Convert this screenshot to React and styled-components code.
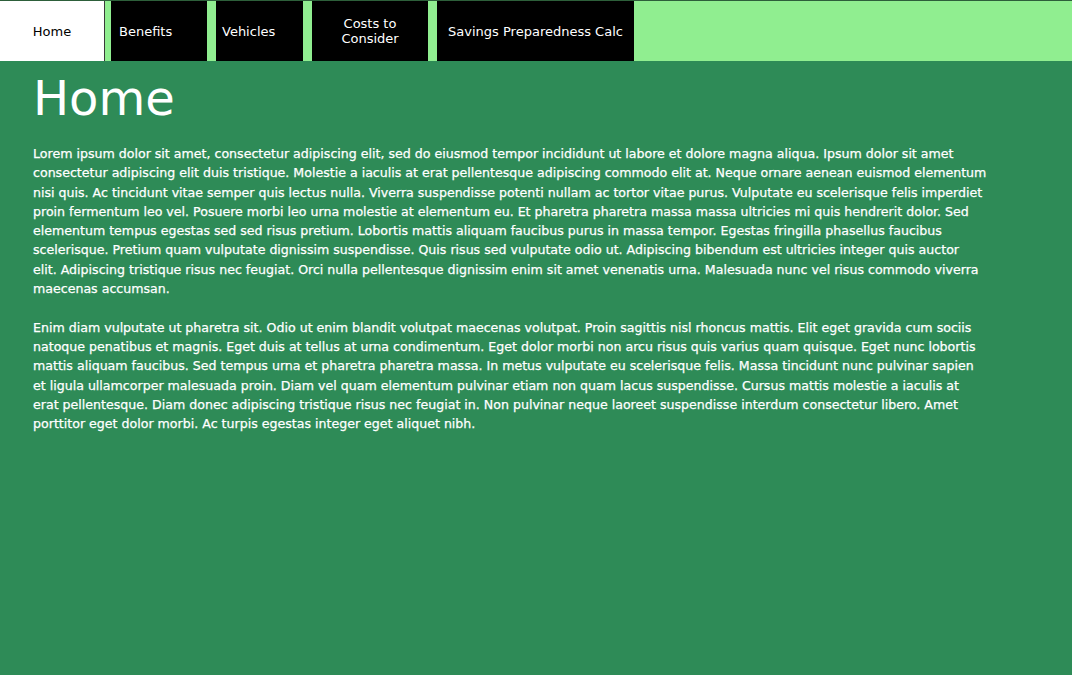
import styled, { createGlobalStyle } from "styled-components";

const GlobalStyle = createGlobalStyle`
  html, body {
    margin: 0;
    padding: 0;
    background-color: #2e8b57;
    font-family: "DejaVu Sans", Verdana, sans-serif;
  }
`;

const Page = styled.div`
  min-height: 675px;
  background-color: #2e8b57;
  color: #ffffff;
`;

const NavBar = styled.nav`
  display: flex;
  align-items: stretch;
  height: 60px;
  background-color: #90ee90;
  border-top: 1px solid #2d5f3a;
`;

const Tab = styled.a`
  display: flex;
  align-items: center;
  justify-content: ${({ center }) => (center ? "center" : "flex-start")};
  box-sizing: border-box;
  width: ${({ w }) => w}px;
  padding-left: ${({ pad }) => pad || 0}px;
  margin-right: ${({ gap }) => gap}px;
  background-color: ${({ active }) => (active ? "#ffffff" : "#000000")};
  color: ${({ active }) => (active ? "#000000" : "#ffffff")};
  border-right: ${({ active }) => (active ? "1px solid #3a3a3a" : "none")};
  font-size: 13px;
  line-height: 15px;
  text-align: center;
  text-decoration: none;
  white-space: pre-line;
  cursor: pointer;
`;

const Main = styled.main`
  padding: 0 33px;
  max-width: 953.6px;
`;

const Title = styled.h1`
  margin: 7px 0 16px;
  font-size: 48px;
  font-weight: normal;
  line-height: 60px;
`;

const Para = styled.p`
  margin: 0 0 19.3px;
  font-size: 12.6px;
  line-height: 19.3px;
  -webkit-text-stroke: 0.25px #ffffff;
`;

const tabs = [
  { label: "Home", w: 105, gap: 6, center: true, active: true },
  { label: "Benefits", w: 96, gap: 9, pad: 8 },
  { label: "Vehicles", w: 87, gap: 9, pad: 6 },
  { label: "Costs to\nConsider", w: 116, gap: 9, center: true },
  { label: "Savings Preparedness Calc", w: 197, gap: 0, center: true },
];

const p1 =
  "Lorem ipsum dolor sit amet, consectetur adipiscing elit, sed do eiusmod tempor incididunt ut labore et dolore magna aliqua. Ipsum dolor sit amet consectetur adipiscing elit duis tristique. Molestie a iaculis at erat pellentesque adipiscing commodo elit at. Neque ornare aenean euismod elementum nisi quis. Ac tincidunt vitae semper quis lectus nulla. Viverra suspendisse potenti nullam ac tortor vitae purus. Vulputate eu scelerisque felis imperdiet proin fermentum leo vel. Posuere morbi leo urna molestie at elementum eu. Et pharetra pharetra massa massa ultricies mi quis hendrerit dolor. Sed elementum tempus egestas sed sed risus pretium. Lobortis mattis aliquam faucibus purus in massa tempor. Egestas fringilla phasellus faucibus scelerisque. Pretium quam vulputate dignissim suspendisse. Quis risus sed vulputate odio ut. Adipiscing bibendum est ultricies integer quis auctor elit. Adipiscing tristique risus nec feugiat. Orci nulla pellentesque dignissim enim sit amet venenatis urna. Malesuada nunc vel risus commodo viverra maecenas accumsan.";

const p2 =
  "Enim diam vulputate ut pharetra sit. Odio ut enim blandit volutpat maecenas volutpat. Proin sagittis nisl rhoncus mattis. Elit eget gravida cum sociis natoque penatibus et magnis. Eget duis at tellus at urna condimentum. Eget dolor morbi non arcu risus quis varius quam quisque. Eget nunc lobortis mattis aliquam faucibus. Sed tempus urna et pharetra pharetra massa. In metus vulputate eu scelerisque felis. Massa tincidunt nunc pulvinar sapien et ligula ullamcorper malesuada proin. Diam vel quam elementum pulvinar etiam non quam lacus suspendisse. Cursus mattis molestie a iaculis at erat pellentesque. Diam donec adipiscing tristique risus nec feugiat in. Non pulvinar neque laoreet suspendisse interdum consectetur libero. Amet porttitor eget dolor morbi. Ac turpis egestas integer eget aliquet nibh.";

function App() {
  return (
    <Page>
      <GlobalStyle />
      <NavBar>
        {tabs.map((t) => (
          <Tab
            key={t.label}
            w={t.w}
            gap={t.gap}
            pad={t.pad}
            center={t.center}
            active={t.active}
          >
            {t.label}
          </Tab>
        ))}
      </NavBar>
      <Main>
        <Title>Home</Title>
        <Para>{p1}</Para>
        <Para>{p2}</Para>
      </Main>
    </Page>
  );
}

export default App;
